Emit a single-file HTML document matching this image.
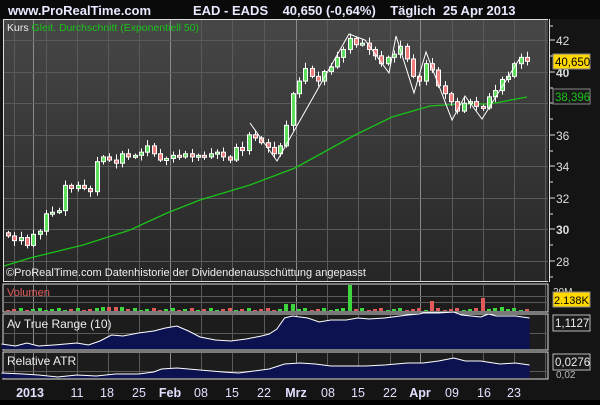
<!DOCTYPE html>
<html><head><meta charset="utf-8"><style>
html,body{margin:0;padding:0;background:#000;}
body{width:600px;height:400px;overflow:hidden;position:relative;font-family:"Liberation Sans",sans-serif;}
svg text{font-family:"Liberation Sans",sans-serif;}
</style></head><body>
<svg id="s" width="600" height="400" xmlns="http://www.w3.org/2000/svg">
<defs>
<linearGradient id="g" x1="0" y1="0" x2="0" y2="1"><stop offset="0" stop-color="#474747"/><stop offset="1" stop-color="#262626"/></linearGradient>
</defs>
<rect width="600" height="400" fill="#141414"/>
<rect x="0" y="0" width="600" height="19" fill="#0a0a0a"/>
<text x="8" y="15" fill="#e8e8ff" font-size="13" font-weight="bold">www.ProRealTime.com</text>
<text x="193" y="15" fill="#e8e8ff" font-size="13" font-weight="bold" xml:space="preserve">EAD - EADS    40,650 (-0,64%)    Täglich  25 Apr 2013</text>
<rect x="3" y="19" width="545" height="263" fill="url(#g)"/>
<rect x="3" y="284" width="545" height="28" fill="#1c1c1c" stroke="#ddd" stroke-width="1"/>
<rect x="3" y="314" width="545" height="36" fill="#1c1c1c" stroke="#ddd" stroke-width="1"/>
<rect x="3" y="352" width="545" height="27" fill="#1c1c1c" stroke="#ddd" stroke-width="1"/>
<g id="grid" stroke="#5a5a5a" stroke-width="1"></g>
<g id="ema"></g>
<g id="c"></g>
<line x1="3.5" y1="19" x2="3.5" y2="282" stroke="#ddd"/>
<line x1="3" y1="19.5" x2="548" y2="19.5" stroke="#ddd"/>
<line x1="3" y1="281.5" x2="548" y2="281.5" stroke="#ddd"/>
<line x1="549.5" y1="19" x2="549.5" y2="282" stroke="#ddd"/>
<text x="7" y="31" fill="#eee" font-size="10.5">Kurs <tspan fill="#19c219">Gleit. Durchschnitt (Exponentiell 50)</tspan></text>
<text x="6" y="276" fill="#eee" font-size="11">©ProRealTime.com  Datenhistorie der Dividendenausschüttung angepasst</text>
<text x="7" y="296" fill="#e05a5a" font-size="11">Volumen</text>
<text x="7" y="328" fill="#eee" font-size="12">Av True Range (10)</text>
<text x="7" y="365" fill="#eee" font-size="12">Relative ATR</text>
<g fill="#ddd" font-size="12">
<text x="556" y="45">42</text><text x="556" y="77" font-weight="bold">40</text><text x="556" y="140">36</text><text x="556" y="171">34</text><text x="556" y="203">32</text><text x="556" y="234" font-weight="bold">30</text><text x="556" y="266">28</text>
<text x="553" y="295" font-size="10">20M</text>
</g>
<g stroke="#ddd"><line x1="549" y1="26" x2="553" y2="26"/><line x1="549" y1="40" x2="555" y2="40"/><line x1="549" y1="56" x2="553" y2="56"/><line x1="549" y1="72" x2="555" y2="72"/><line x1="549" y1="88" x2="553" y2="88"/><line x1="549" y1="103" x2="555" y2="103"/><line x1="549" y1="119" x2="553" y2="119"/><line x1="549" y1="135" x2="555" y2="135"/><line x1="549" y1="151" x2="553" y2="151"/><line x1="549" y1="166" x2="555" y2="166"/><line x1="549" y1="182" x2="553" y2="182"/><line x1="549" y1="198" x2="555" y2="198"/><line x1="549" y1="214" x2="553" y2="214"/><line x1="549" y1="229" x2="555" y2="229"/><line x1="549" y1="245" x2="553" y2="245"/><line x1="549" y1="261" x2="555" y2="261"/><line x1="549" y1="277" x2="553" y2="277"/></g>
<rect x="553" y="54" width="37" height="15" fill="#ffd800" stroke="#888"/>
<text x="555" y="66" fill="#000" font-size="11.5">40,650</text>
<rect x="553" y="89" width="37" height="15" fill="#1a1a1a" stroke="#888"/>
<text x="555" y="101" fill="#19c219" font-size="11.5">38,396</text>
<rect x="553" y="292" width="37" height="15" fill="#ffd800" stroke="#888"/>
<text x="554" y="304" fill="#000" font-size="11">2.138K</text>
<rect x="553" y="315" width="37" height="16" fill="#1a1a1a" stroke="#bbb"/>
<text x="555" y="327" fill="#eee" font-size="11.5">1,1127</text>
<rect x="553" y="354" width="37" height="16" fill="#1a1a1a" stroke="#bbb"/>
<text x="555" y="366" fill="#eee" font-size="11.5">0,0276</text>
<text x="556" y="378" fill="#bbb" font-size="10">0,02</text>
<g fill="#e0e0ff" font-size="12.5" text-anchor="middle">
<text x="30" y="397" font-weight="bold">2013</text><text x="77" y="397">11</text><text x="107" y="397">18</text><text x="139" y="397">25</text><text x="170" y="397" font-weight="bold">Feb</text><text x="201" y="397">08</text><text x="232" y="397">15</text><text x="264" y="397">22</text><text x="296" y="397" font-weight="bold">Mrz</text><text x="328" y="397">08</text><text x="358" y="397">15</text><text x="390" y="397">22</text><text x="420" y="397" font-weight="bold">Apr</text><text x="452" y="397">09</text><text x="484" y="397">16</text><text x="514" y="397">23</text>
</g>
</svg>
<script>
var S='http://www.w3.org/2000/svg';
function el(p,t,a){var e=document.createElementNS(S,t);for(var k in a)e.setAttribute(k,a[k]);document.getElementById(p).appendChild(e);return e;}
var vx=[14,33,46,77,108,139,170,201,232,264,296,327,358,390,420,452,483,514,545];
vx.forEach(function(x){[[20,281],[285,311],[315,349],[353,378]].forEach(function(r){el('grid','line',{x1:x+.5,x2:x+.5,y1:r[0],y2:r[1],stroke:(x==33||x==170||x==296||x==420)?'#8a8a8a':'#5a5a5a'});});});
[40,72,103,135,166,198,229,261].forEach(function(y){el('grid','line',{x1:4,x2:548,y1:y+.5,y2:y+.5});});
[296,302].forEach(function(y){el('grid','line',{x1:4,x2:548,y1:y+.5,y2:y+.5});});
[333].forEach(function(y){el('grid','line',{x1:4,x2:548,y1:y+.5,y2:y+.5});});
[371].forEach(function(y){el('grid','line',{x1:4,x2:548,y1:y+.5,y2:y+.5});});
function Y(p){return 40+(42-p)*15.8;}
var C=[29.6,29.3,29.5,29.0,29.7,29.9,31.0,31.1,31.2,32.8,32.6,32.8,32.6,32.4,34.3,34.6,34.4,34.2,34.8,34.6,34.7,34.9,35.3,34.8,34.4,34.5,34.7,34.6,34.8,34.6,34.7,34.6,34.8,34.9,34.6,34.4,35.2,35.0,36.0,35.8,35.5,35.2,34.8,35.3,36.6,38.6,39.4,40.2,39.7,39.4,40.0,40.3,40.9,41.4,42.1,41.7,41.8,41.4,41.0,40.5,40.9,41.1,41.6,40.8,39.7,39.4,40.5,40.1,39.1,38.6,38.1,37.5,38.0,38.1,37.8,37.7,38.4,38.8,39.5,39.7,40.5,40.9,40.65];
var n=C.length,x0=8,dx=(527-8)/(n-1);
for(var i=0;i<n;i++){var x=Math.round(x0+i*dx),o=i?C[i-1]:29.8,c=C[i];var hi=Math.max(o,c)+0.12+((i*7)%5)*0.06,lo=Math.min(o,c)-0.12-((i*3)%4)*0.07;
el('c','line',{x1:x+.5,x2:x+.5,y1:Y(hi),y2:Y(lo),stroke:'#fff'});
var t=Y(Math.max(o,c)),b=Y(Math.min(o,c));if(b-t<2){b=t+2;}
el('c','rect',{x:x-1.5,y:t,width:4,height:b-t,fill:c>=o?'#5ee05e':'#f07c7c',stroke:'#fff','stroke-width':1});
var v=1+((i*13)%3);if(i==54)v=26;if(i==44||i==45)v=7;if(i==75)v=13;if(i==67)v=10;if(i==78)v=4;if(i>=15&&i<=18)v=4;
el('c','rect',{x:x-2,y:311-v,width:4,height:v,fill:c>=o?'#3ed63e':'#e05a5a'});}
var e=[[4,266],[30,258],[83,245],[130,230],[167,213],[200,200],[250,185],[295,168],[355,135],[392,117],[430,106],[460,104],[490,104],[527,97]];
el('ema','polyline',{points:e.map(function(p){return p.join(',')}).join(' '),fill:'none',stroke:'#19c219','stroke-width':1.3});
var z=[[250,123],[277,161],[349,34],[365,40],[389,73],[396,36],[414,93],[426,52],[452,120],[465,96],[482,119],[520,58]];
el('c','polyline',{points:z.map(function(p){return p.join(',')}).join(' '),fill:'none',stroke:'#fff','stroke-width':1});
var a=[[4,344],[40,346],[70,343],[100,346],[140,345],[170,344],[200,343],[230,345],[260,341],[290,335],[320,336],[360,333],[400,331],[430,328],[460,326],[490,331],[520,337],[560,340],[600,341],[640,339],[680,336],[700,334],[720,329],[740,318],[760,316],[800,318],[830,322],[860,320],[900,320],[930,318],[960,319],[1000,318],[1040,316],[1060,315],[1090,314],[1100,313],[1140,313],[1180,312],[1200,315],[1250,317],[1270,314],[1290,316],[1340,316],[1377,318]];
function area(pts,base){var d='M'+pts[0][0]/2.6+','+base;pts.forEach(function(p){d+=' L'+(p[0]/2.6).toFixed(1)+','+p[1];});d+=' L'+pts[pts.length-1][0]/2.6+','+base+'Z';el('c','path',{d:d,fill:'#0c1250'});
el('c','polyline',{points:pts.map(function(p){return (p[0]/2.6).toFixed(1)+','+p[1]}).join(' '),fill:'none',stroke:'#fff','stroke-width':1});}
area(a,349);
var r=[[4,373],[60,374],[100,375],[150,377],[200,375],[250,376],[300,374],[360,374],[400,372],[420,369],[460,368],[520,370],[580,372],[620,373],[660,371],[700,369],[740,364],[780,363],[820,364],[860,366],[900,366],[950,366],[1000,365],[1060,363],[1100,363],[1140,361],[1180,358],[1210,361],[1250,361],[1300,364],[1340,363],[1377,365]];
area(r,378);
</script>
</body></html>
